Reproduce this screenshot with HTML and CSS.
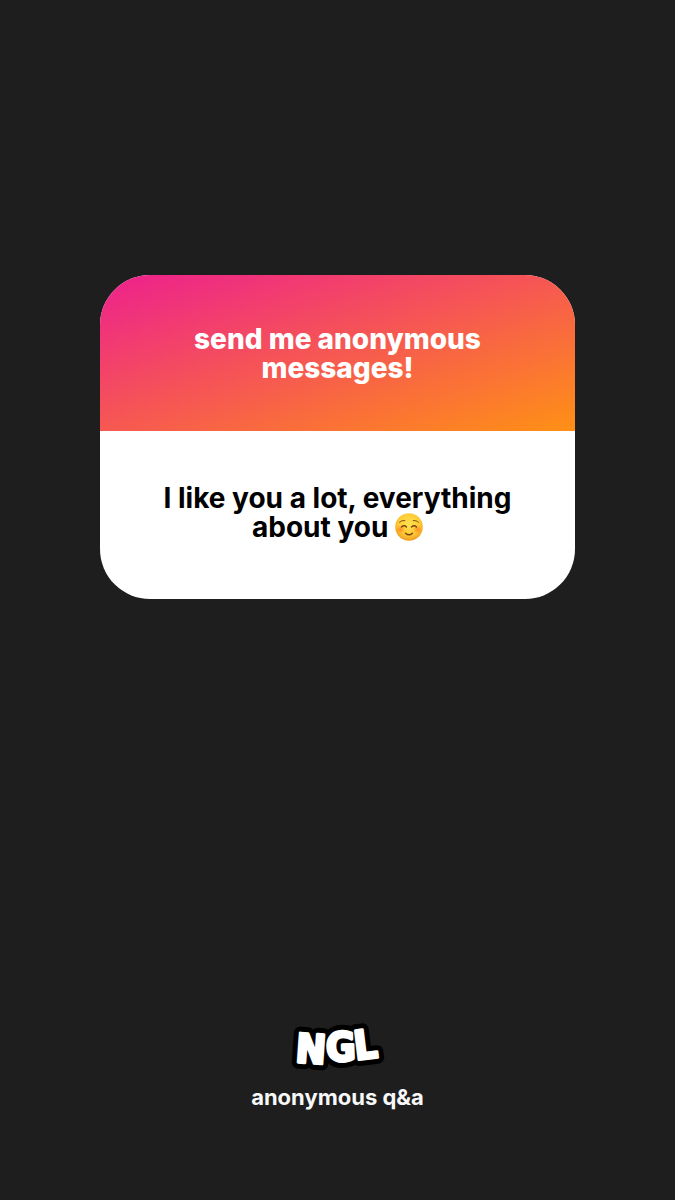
FILE: index.html
```html
<!DOCTYPE html>
<html lang="en">
<head>
    <meta charset="UTF-8">
    <meta name="viewport" content="width=device-width, initial-scale=1.0">
    <title>NGL - anonymous q&amp;a</title>
    <link rel="stylesheet" href="styles.css">
</head>
<body>
    <main>
        <!-- Question card -->
        <article class="card">
            <header class="card-header">
                <h1>send me anonymous messages!</h1>
            </header>
            <div class="card-body">
                <p>I like you a lot, everything about you
                    <svg class="emoji" viewBox="0 0 28 28" role="img" aria-label="smiling face">
                        <defs>
                            <radialGradient id="face" cx="50%" cy="40%" r="60%">
                                <stop offset="0" stop-color="#ffe04f"/>
                                <stop offset="0.65" stop-color="#fecb35"/>
                                <stop offset="1" stop-color="#f09a20"/>
                            </radialGradient>
                            <radialGradient id="blush">
                                <stop offset="0" stop-color="#ff7d22" stop-opacity="0.8"/>
                                <stop offset="1" stop-color="#ff8a22" stop-opacity="0"/>
                            </radialGradient>
                        </defs>
                        <circle cx="14" cy="14" r="13.8" fill="url(#face)"/>
                        <ellipse cx="5.5" cy="16.5" rx="5" ry="4.5" fill="url(#blush)"/>
                        <ellipse cx="22.5" cy="16.5" rx="5" ry="4.5" fill="url(#blush)"/>
                        <g fill="none" stroke="#764414" stroke-linecap="round">
                            <path d="M4.5 9.2Q6.5 7 9.8 7.5M18.2 7.5Q21.5 7 23.5 9.2" stroke-width="0.9"/>
                            <path d="M6.5 14Q9 11.6 11.5 14M16.5 14Q19 11.6 21.5 14" stroke-width="1.4"/>
                            <path d="M10.5 20.2Q14 23.5 17.5 20.2" stroke-width="1.4"/>
                        </g>
                    </svg>
                </p>
            </div>
        </article>
    </main>

    <!-- Branding -->
    <footer>
        <svg class="logo" viewBox="0 0 104 60" role="img" aria-label="NGL">
            <g class="logo-outline">
                <text x="10" y="48" transform="rotate(4 25 33)">N</text>
                <text x="40" y="46" transform="rotate(-2 53 31)">G</text>
                <text x="68" y="44" transform="rotate(-7 78 30)">L</text>
            </g>
            <g class="logo-letters">
                <text x="10" y="48" transform="rotate(4 25 33)">N</text>
                <text x="40" y="46" transform="rotate(-2 53 31)">G</text>
                <text x="68" y="44" transform="rotate(-7 78 30)">L</text>
            </g>
        </svg>
        <p class="tagline">anonymous q&amp;a</p>
    </footer>
</body>
</html>
```

FILE: styles.css
```css
* {
    margin: 0;
    padding: 0;
    box-sizing: border-box;
}

body {
    display: flex;
    flex-direction: column;
    justify-content: space-between;
    min-height: 100vh;
    padding: 275px 100px 89px;
    background-color: #1e1e1e;
    font-family: Inter, "Liberation Sans", sans-serif;
}

.card {
    border-radius: 50px;
    overflow: hidden;
    background-color: white;
    text-align: center;
    font-size: 28px;
    line-height: 29px;
}

.card-header {
    padding: 50px 56px 48px;
    background: linear-gradient(to bottom right, #ee2589 4%, #ff9015);
    color: white;
}

.card-header h1 {
    font-size: 28px;
    font-weight: 800;
}

.card-body {
    padding: 53px 56px 57px;
    color: black;
    font-weight: 700;
}

.emoji {
    width: 28px;
    height: 28px;
    vertical-align: -4px;
}

footer {
    display: flex;
    flex-direction: column;
    align-items: center;
    gap: 8px;
    color: #f8f8f8;
}

.logo {
    width: 104px;
    height: 60px;
}

.logo text {
    font-family: "DejaVu Sans Condensed", "DejaVu Sans", sans-serif;
    font-size: 40px;
    font-weight: 700;
    stroke-linejoin: round;
}

.logo-outline {
    fill: black;
    stroke: black;
    stroke-width: 13px;
}

.logo-letters {
    fill: white;
    stroke: white;
    stroke-width: 3px;
}

.tagline {
    font-size: 22px;
    font-weight: 700;
    line-height: 28px;
}
```
